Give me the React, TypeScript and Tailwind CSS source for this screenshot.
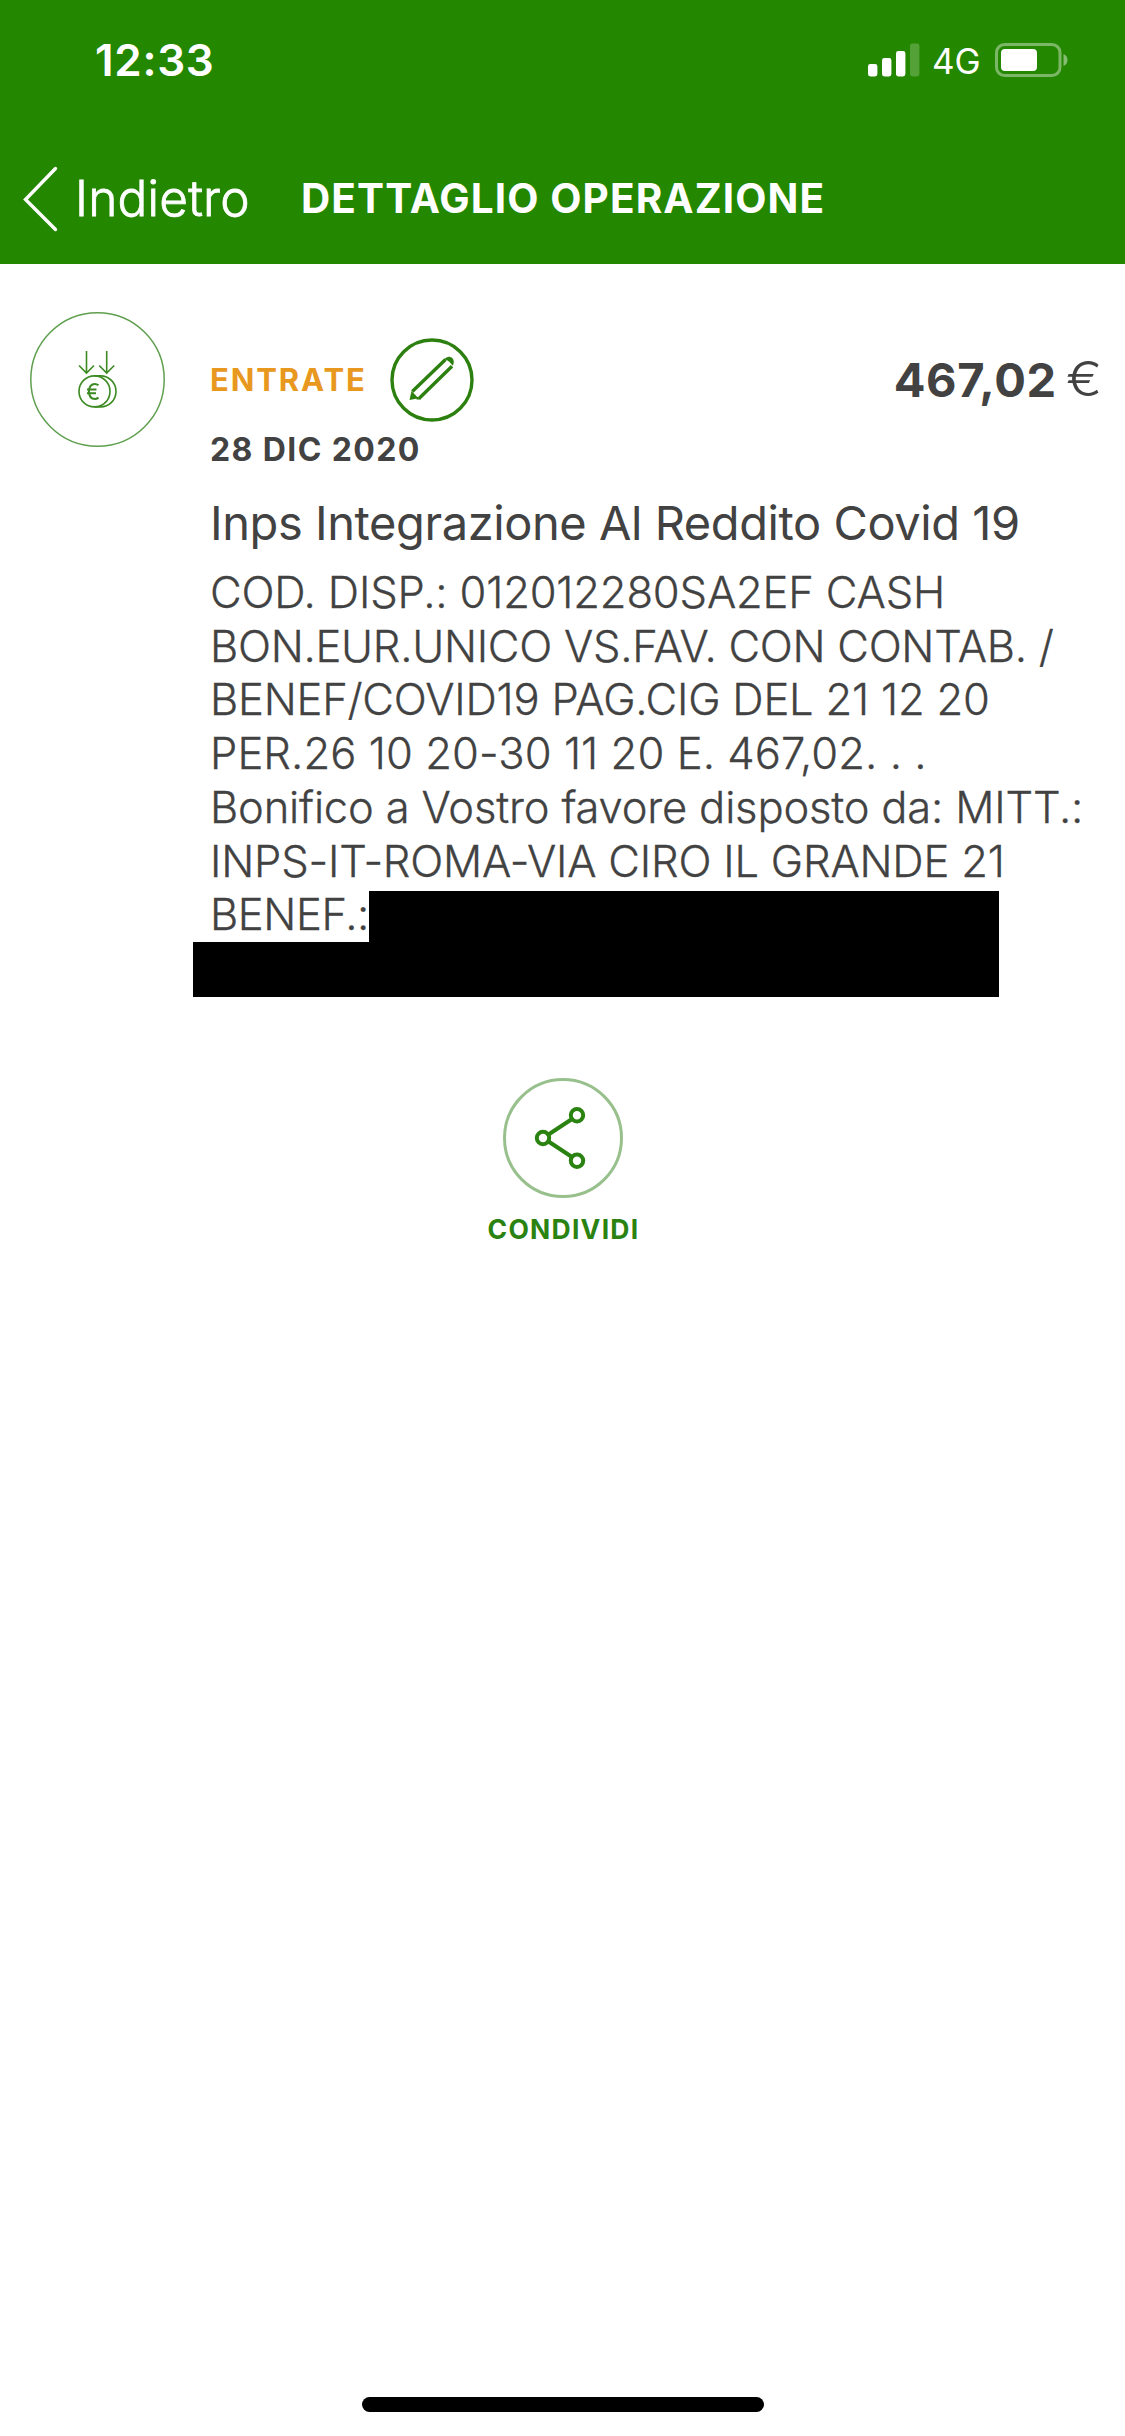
import clsx from 'clsx';

interface DetailLine {
  text: string;
  tracking: string;
}

const detailLines: DetailLine[] = [
  { text: 'COD. DISP.: 012012280SA2EF CASH', tracking: 'tracking-[-0.16px]' },
  { text: 'BON.EUR.UNICO VS.FAV. CON CONTAB. /', tracking: 'tracking-[-0.27px]' },
  { text: 'BENEF/COVID19 PAG.CIG DEL 21 12 20', tracking: 'tracking-[-0.2px]' },
  { text: 'PER.26 10 20-30 11 20 E. 467,02. . .', tracking: 'tracking-[0.08px]' },
  { text: 'Bonifico a Vostro favore disposto da: MITT.:', tracking: 'tracking-[-0.18px]' },
  { text: 'INPS-IT-ROMA-VIA CIRO IL GRANDE 21', tracking: 'tracking-[-0.2px]' },
  { text: 'BENEF.:', tracking: 'tracking-[-0.4px]' },
];

function StatusBar() {
  return (
    <div className="flex h-[120px] items-center justify-between pl-[95px] pr-[56px]">
      <span className="text-[44px] leading-none font-semibold tracking-[0.7px]">12:33</span>

      <div className="flex items-center">
        {/* Signal */}
        <svg width="52" height="34" viewBox="0 0 52 34" fill="white">
          <rect x="0" y="21" width="9.4" height="12.5" rx="2.4" />
          <rect x="14" y="15" width="9.4" height="18.5" rx="2.4" />
          <rect x="28" y="8" width="9.4" height="25.5" rx="2.4" />
          <rect x="42" y="0.5" width="9.4" height="33" rx="2.4" opacity="0.22" />
        </svg>
        <span className="ml-[12px] w-[63px] pt-[2px] text-[35px] leading-none">4G</span>
        {/* Battery */}
        <svg width="74" height="34" viewBox="0 0 74 34" fill="none">
          <rect x="1.5" y="1.5" width="63.5" height="31" rx="8" stroke="white" strokeOpacity="0.4" strokeWidth="3" />
          <rect x="6" y="6" width="36" height="22" rx="4" fill="white" />
          <path d="M68.5 11c2.5 1 4 3.200 4 6s-1.500 5-4 6z" fill="white" fillOpacity="0.45" />
        </svg>
      </div>
    </div>
  );
}

function IncomeIcon() {
  return (
    <svg width="136" height="136" viewBox="0 0 136 136" fill="none" stroke="#3c8a22" strokeWidth="1.600">
      <circle cx="67.500" cy="67.500" r="66.700" stroke="#5f9f4e" strokeWidth="1.500" />
      <path d="M56.500 39v21.500M49 53.500l7.500 7.500 7.500-7.500M76.700 39v21.500M69.200 53.500l7.500 7.500 7.500-7.500" />
      <circle cx="64.500" cy="79.400" r="15.500" />
      <path d="M64.500 63.900h6a15.500 15.500 0 0 1 0 31h-6" />
      <path
        strokeWidth="2"
        d="M68.500 73.200c-1.300-1-2.400-1.300-3.600-1.300-3.700 0-5.900 3-5.900 7.500s2.200 7.500 5.900 7.500c1.200 0 2.300-.3 3.600-1.300M57 77.600h9.500M57 81.200h9"
      />
    </svg>
  );
}

function PencilIcon() {
  return (
    <svg width="84" height="84" viewBox="0 0 84 84" fill="none" stroke="#2c800f" strokeWidth="3.400">
      <circle cx="42" cy="42" r="40" />
      <path d="M22.300 53.500 55.500 21.500M29.500 60 62 28.300" />
      <path d="M26.500 60.300h4.500" strokeWidth="2.500" />
      <path d="M54.300 21.300c2.500-3.300 6-3.300 8-1.200s2 5 .3 7.700c-1.800-3-4.300-5.300-8.300-6.500z" fill="#2c800f" stroke="none" />
      <path d="M21.500 53 19.500 62l9-1.800z" fill="#2c800f" stroke="none" />
    </svg>
  );
}

function ShareIcon() {
  return (
    <svg width="120" height="120" viewBox="0 0 120 120" fill="none" stroke="#2a8210" strokeWidth="4">
      <circle cx="60" cy="60" r="58.500" stroke="#98c08c" strokeWidth="3" />
      <path d="M45.500 56.500 69 41M45.500 63.500 69 79" />
      <circle cx="40" cy="60" r="6.200" />
      <circle cx="74" cy="37.300" r="6.200" />
      <circle cx="74" cy="82.700" r="6.200" />
    </svg>
  );
}

export default function App() {
  return (
    <div className="flex h-[2436px] w-[1125px] flex-col bg-white font-['Inter',sans-serif] text-[#424242]">
      {/* Header */}
      <header className="h-[264px] bg-[#248700] text-white">
        <StatusBar />
        <div className="flex h-[157px] items-center pl-[23px]">
          <svg width="36" height="66" viewBox="0 0 36 66" fill="none" stroke="white" strokeWidth="3.400" strokeLinecap="round">
            <path d="M32.500 2.500 2.500 33.500l30 30" />
          </svg>
          <span className="ml-[16px] w-[226px] text-[49.500px] leading-none font-light tracking-[0.2px] [-webkit-text-stroke:0.8px_white]">Indietro</span>
          <h1 className="pt-px text-[40.500px] leading-none font-bold tracking-[1.1px] whitespace-nowrap">DETTAGLIO OPERAZIONE</h1>
        </div>
      </header>

      {/* Operation */}
      <main className="flex pt-[48px] pl-[30px]">
        <IncomeIcon />
        <div className="ml-[44px] flex-1">
          <div className="flex h-[136px] items-center pr-[23px]">
            <span className="w-[180px] pb-[2px] text-[31px] leading-none font-bold tracking-[1.900px] text-[#e8981e]">ENTRATE</span>
            <PencilIcon />
            <div className="ml-auto flex items-center pb-[2px] text-[47px] leading-none whitespace-nowrap">
              <span className="font-bold tracking-[0.6px]">467,02</span>
              <span className="ml-[13px] origin-right scale-x-[1.12] text-[48px] font-light">€</span>
            </div>
          </div>
          <p className="h-[44px] -mt-[20px] text-[32px] leading-[44px] font-bold tracking-[1.400px]">28 DIC 2020</p>
          <h2 className="mt-[9px] text-[47px] leading-[84px] tracking-[-0.43px] whitespace-nowrap">Inps Integrazione Al Reddito Covid 19</h2>
          <div className="relative pt-px text-[43.500px] leading-[53.700px] font-light whitespace-nowrap [-webkit-text-stroke:0.3px_#424242]">
            {detailLines.map(line => (
              <p key={line.text} className={clsx(line.tracking)}>{line.text}</p>
            ))}
            {/* Beneficiary is hidden */}
            <div className="absolute top-[326px] left-[159px] h-[52px] w-[630px] bg-black" />
            <div className="absolute top-[377px] -left-[17px] h-[55px] w-[806px] bg-black" />
          </div>
        </div>
      </main>

      {/* Share */}
      <div className="mt-[136px] flex flex-col items-center">
        <ShareIcon />
        <span className="mt-[18px] pl-[2px] text-[26.500px] leading-none font-bold tracking-[1.250px] text-[#2a8210]">CONDIVIDI</span>
      </div>

      <div className="mx-auto mt-auto mb-[24px] h-[15px] w-[402px] rounded-full bg-black" />
    </div>
  );
}
